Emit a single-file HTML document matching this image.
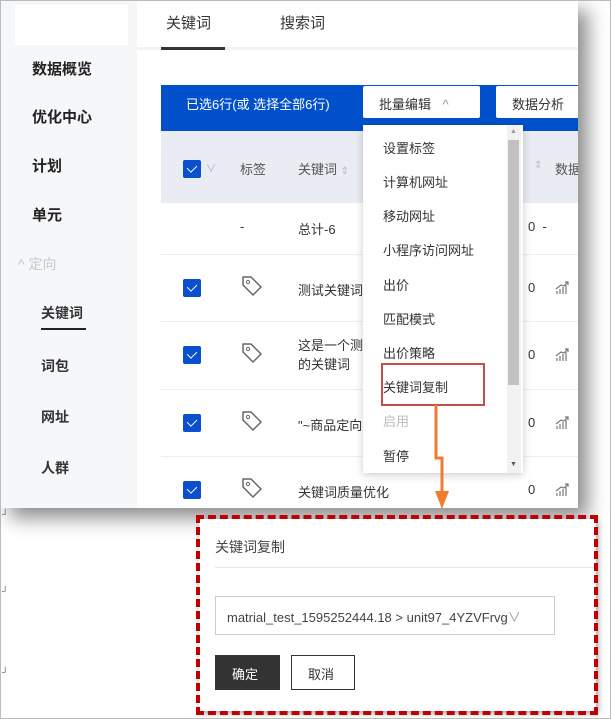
<!DOCTYPE html><html><head><meta charset="utf-8"><style>
*{margin:0;padding:0;box-sizing:border-box}
body{width:611px;height:719px;overflow:hidden;background:#fff;font-family:"Liberation Sans","Noto Sans CJK SC",sans-serif;position:relative;color:#333}
.a{position:absolute;white-space:nowrap}
#frame{position:absolute;left:0;top:0;width:611px;height:719px;border:1px solid #bbb;pointer-events:none;z-index:50}
#panel{position:absolute;left:0;top:0;width:578px;height:508px;background:#fff;overflow:hidden;box-shadow:10px 10px 18px rgba(0,0,0,.45)}
#side{position:absolute;left:0;top:0;width:137px;height:508px;background:#f6f7f9}
.nav{font-size:15px;font-weight:bold;color:#222;left:32px}
.sub{font-size:14px;font-weight:bold;color:#333;left:41px}
.cb{position:absolute;width:18px;height:18px;background:#0a4fd0;border-radius:2px}
.cb:after{content:"";position:absolute;left:6px;top:3px;width:5px;height:8px;border:solid #fff;border-width:0 1.5px 1.5px 0;transform:rotate(45deg)}
.sep{position:absolute;left:161px;width:417px;height:1px;background:#eceef3}
.dd{font-size:13px;color:#333;left:383px}
</style></head><body>
<div id="panel">
 <div id="side">
  <div class="a" style="left:15px;top:5px;width:113px;height:40px;background:#fff"></div>
  <div class="a nav" style="top:58px">数据概览</div>
  <div class="a nav" style="top:106px">优化中心</div>
  <div class="a nav" style="top:155px">计划</div>
  <div class="a nav" style="top:204px">单元</div>
  <div class="a" style="left:18px;top:254px;font-size:14px;color:#c8c8c8">^ 定向</div>
  <div class="a sub" style="top:303px">关键词</div>
  <div class="a" style="left:41px;top:328px;width:45px;height:2px;background:#222"></div>
  <div class="a sub" style="top:356px">词包</div>
  <div class="a sub" style="top:407px">网址</div>
  <div class="a sub" style="top:458px">人群</div>
 </div>
 <div class="a" style="left:137px;top:47px;width:441px;height:3px;background:#f2f3f5"></div>
 <div class="a" style="left:166px;top:12px;font-size:15px;color:#333">关键词</div>
 <div class="a" style="left:161px;top:47px;width:64px;height:3px;background:#333"></div>
 <div class="a" style="left:280px;top:12px;font-size:15px;color:#333">搜索词</div>
 <div class="a" style="left:161px;top:85px;width:417px;height:46px;background:#0050cc"></div>
 <div class="a" style="left:186px;top:94px;font-size:13px;color:#fff">已选6行(或 选择全部6行)</div>
 <div class="a" style="left:363px;top:86px;width:117px;height:32px;background:#fff;border-radius:2px;font-size:13px;padding:8px 0 0 16px">批量编辑 <span style="color:#999;margin-left:8px">^</span></div>
 <div class="a" style="left:496px;top:86px;width:90px;height:32px;background:#fff;border-radius:2px;font-size:13px;padding:8px 0 0 16px">数据分析</div>
 <div class="a" style="left:161px;top:131px;width:417px;height:72px;background:#e9ecf3"></div>
 <div class="cb" style="left:183px;top:160px"></div>
 <div class="a" style="left:206px;top:160px;font-size:10px;color:#aaa">∨</div>
 <div class="a" style="left:240px;top:159px;font-size:13px;color:#555">标签</div>
 <div class="a" style="left:298px;top:159px;font-size:13px;color:#555">关键词 <span style="color:#bbb;font-size:10px">⇕</span></div>
 <div class="a" style="left:534px;top:160px;font-size:10px;color:#bbb">⇕</div>
 <div class="a" style="left:555px;top:159px;font-size:13px;color:#555">数据</div>
 <div class="a" style="left:240px;top:219px;font-size:13px">-</div>
 <div class="a" style="left:298px;top:219px;font-size:13px">总计-6</div>
 <div class="a" style="left:528px;top:219px;font-size:13px">0&nbsp;&nbsp;-</div>
 <div class="sep" style="top:254px"></div><div class="sep" style="top:321px"></div><div class="sep" style="top:389px"></div><div class="sep" style="top:456px"></div>
 <div class="cb" style="left:183px;top:279px"></div><div class="cb" style="left:183px;top:346px"></div><div class="cb" style="left:183px;top:414px"></div><div class="cb" style="left:183px;top:481px"></div>
 <svg class="a" style="left:240px;top:274px" width="24" height="24" viewBox="0 0 24 24"><path d="M3 3h8l10 10-8 8L3 11z" fill="none" stroke="#666" stroke-width="1.5" stroke-linejoin="round"/><circle cx="8" cy="8" r="1.6" fill="none" stroke="#666"/></svg>
 <svg class="a" style="left:240px;top:341px" width="24" height="24" viewBox="0 0 24 24"><path d="M3 3h8l10 10-8 8L3 11z" fill="none" stroke="#666" stroke-width="1.5" stroke-linejoin="round"/><circle cx="8" cy="8" r="1.6" fill="none" stroke="#666"/></svg>
 <svg class="a" style="left:240px;top:409px" width="24" height="24" viewBox="0 0 24 24"><path d="M3 3h8l10 10-8 8L3 11z" fill="none" stroke="#666" stroke-width="1.5" stroke-linejoin="round"/><circle cx="8" cy="8" r="1.6" fill="none" stroke="#666"/></svg>
 <svg class="a" style="left:240px;top:476px" width="24" height="24" viewBox="0 0 24 24"><path d="M3 3h8l10 10-8 8L3 11z" fill="none" stroke="#666" stroke-width="1.5" stroke-linejoin="round"/><circle cx="8" cy="8" r="1.6" fill="none" stroke="#666"/></svg>
 <div class="a" style="left:298px;top:280px;font-size:13px">测试关键词</div>
 <div class="a" style="left:298px;top:336px;font-size:13px;line-height:19px">这是一个测<br>的关键词</div>
 <div class="a" style="left:298px;top:415px;font-size:13px">"~商品定向</div>
 <div class="a" style="left:298px;top:482px;font-size:13px">关键词质量优化</div>
 <div class="a" style="left:528px;top:280px;font-size:13px">0</div><div class="a" style="left:528px;top:347px;font-size:13px">0</div><div class="a" style="left:528px;top:415px;font-size:13px">0</div><div class="a" style="left:528px;top:482px;font-size:13px">0</div>
 <svg class="a" style="left:555px;top:281px" width="14" height="14"><path d="M2 13V10M5 13V8M8 13V6M11 13V4M1 8L6 4 9 5 13 1M10 1h3v3" stroke="#777" fill="none" stroke-width="1.2"/></svg>
 <svg class="a" style="left:555px;top:348px" width="14" height="14"><path d="M2 13V10M5 13V8M8 13V6M11 13V4M1 8L6 4 9 5 13 1M10 1h3v3" stroke="#777" fill="none" stroke-width="1.2"/></svg>
 <svg class="a" style="left:555px;top:416px" width="14" height="14"><path d="M2 13V10M5 13V8M8 13V6M11 13V4M1 8L6 4 9 5 13 1M10 1h3v3" stroke="#777" fill="none" stroke-width="1.2"/></svg>
 <svg class="a" style="left:555px;top:483px" width="14" height="14"><path d="M2 13V10M5 13V8M8 13V6M11 13V4M1 8L6 4 9 5 13 1M10 1h3v3" stroke="#777" fill="none" stroke-width="1.2"/></svg>
 <div class="a" style="left:363px;top:125px;width:160px;height:348px;background:#fff;box-shadow:0 2px 8px rgba(0,0,0,.2)"></div>
 <div class="a" style="left:507px;top:125px;width:14px;height:348px;background:#f2f2f2"></div>
 <div class="a" style="left:508px;top:140px;width:11px;height:245px;background:#c1c1c1"></div>
 <div class="a" style="left:510px;top:128px;font-size:7px;color:#999">▲</div>
 <div class="a" style="left:510px;top:461px;font-size:7px;color:#555">▼</div>
 <div class="a dd" style="top:138px">设置标签</div>
 <div class="a dd" style="top:172px">计算机网址</div>
 <div class="a dd" style="top:206px">移动网址</div>
 <div class="a dd" style="top:240px">小程序访问网址</div>
 <div class="a dd" style="top:275px">出价</div>
 <div class="a dd" style="top:309px">匹配模式</div>
 <div class="a dd" style="top:343px">出价策略</div>
 <div class="a dd" style="top:377px">关键词复制</div>
 <div class="a dd" style="top:411px;color:#bbb">启用</div>
 <div class="a dd" style="top:446px">暂停</div>
 <div class="a" style="left:381px;top:363px;width:104px;height:43px;border:2px solid #c0504d"></div>
 <svg class="a" style="left:425px;top:405px" width="24" height="104"><path d="M11 0V53H17V92" fill="none" stroke="#ee7d31" stroke-width="3"/><path d="M10 86L24 86 17 104z" fill="#ee7d31"/></svg>
</div>
<div class="a" style="left:2px;top:509px;font-size:9px;color:#555">┘</div>
<div class="a" style="left:2px;top:586px;font-size:9px;color:#555">┘</div>
<div class="a" style="left:2px;top:667px;font-size:9px;color:#555">┘</div>
<div class="a" style="left:199px;top:519px;width:397px;height:192px;background:#fff;box-shadow:2px 2px 6px rgba(0,0,0,.4)"></div>
<div class="a" style="left:196px;top:515px;width:402px;height:200px;border:4px dashed #c00000"></div>
<div class="a" style="left:215px;top:537px;font-size:14px;color:#444">关键词复制</div>
<div class="a" style="left:215px;top:567px;width:379px;height:1px;background:#e8e8e8"></div>
<div class="a" style="left:215px;top:596px;width:340px;height:39px;border:1px solid #ccc;font-size:13px;color:#444;padding:10px 0 0 11px">matrial_test_1595252444.18 &gt; unit97_4YZVFrvg<span style="color:#999">∨</span></div>
<div class="a" style="left:215px;top:655px;width:65px;height:35px;background:#333;color:#fff;font-size:13px;padding:9px 0 0 17px">确定</div>
<div class="a" style="left:291px;top:655px;width:64px;height:35px;border:1px solid #333;font-size:13px;padding:8px 0 0 16px">取消</div>
<div id="frame"></div>
</body></html>
